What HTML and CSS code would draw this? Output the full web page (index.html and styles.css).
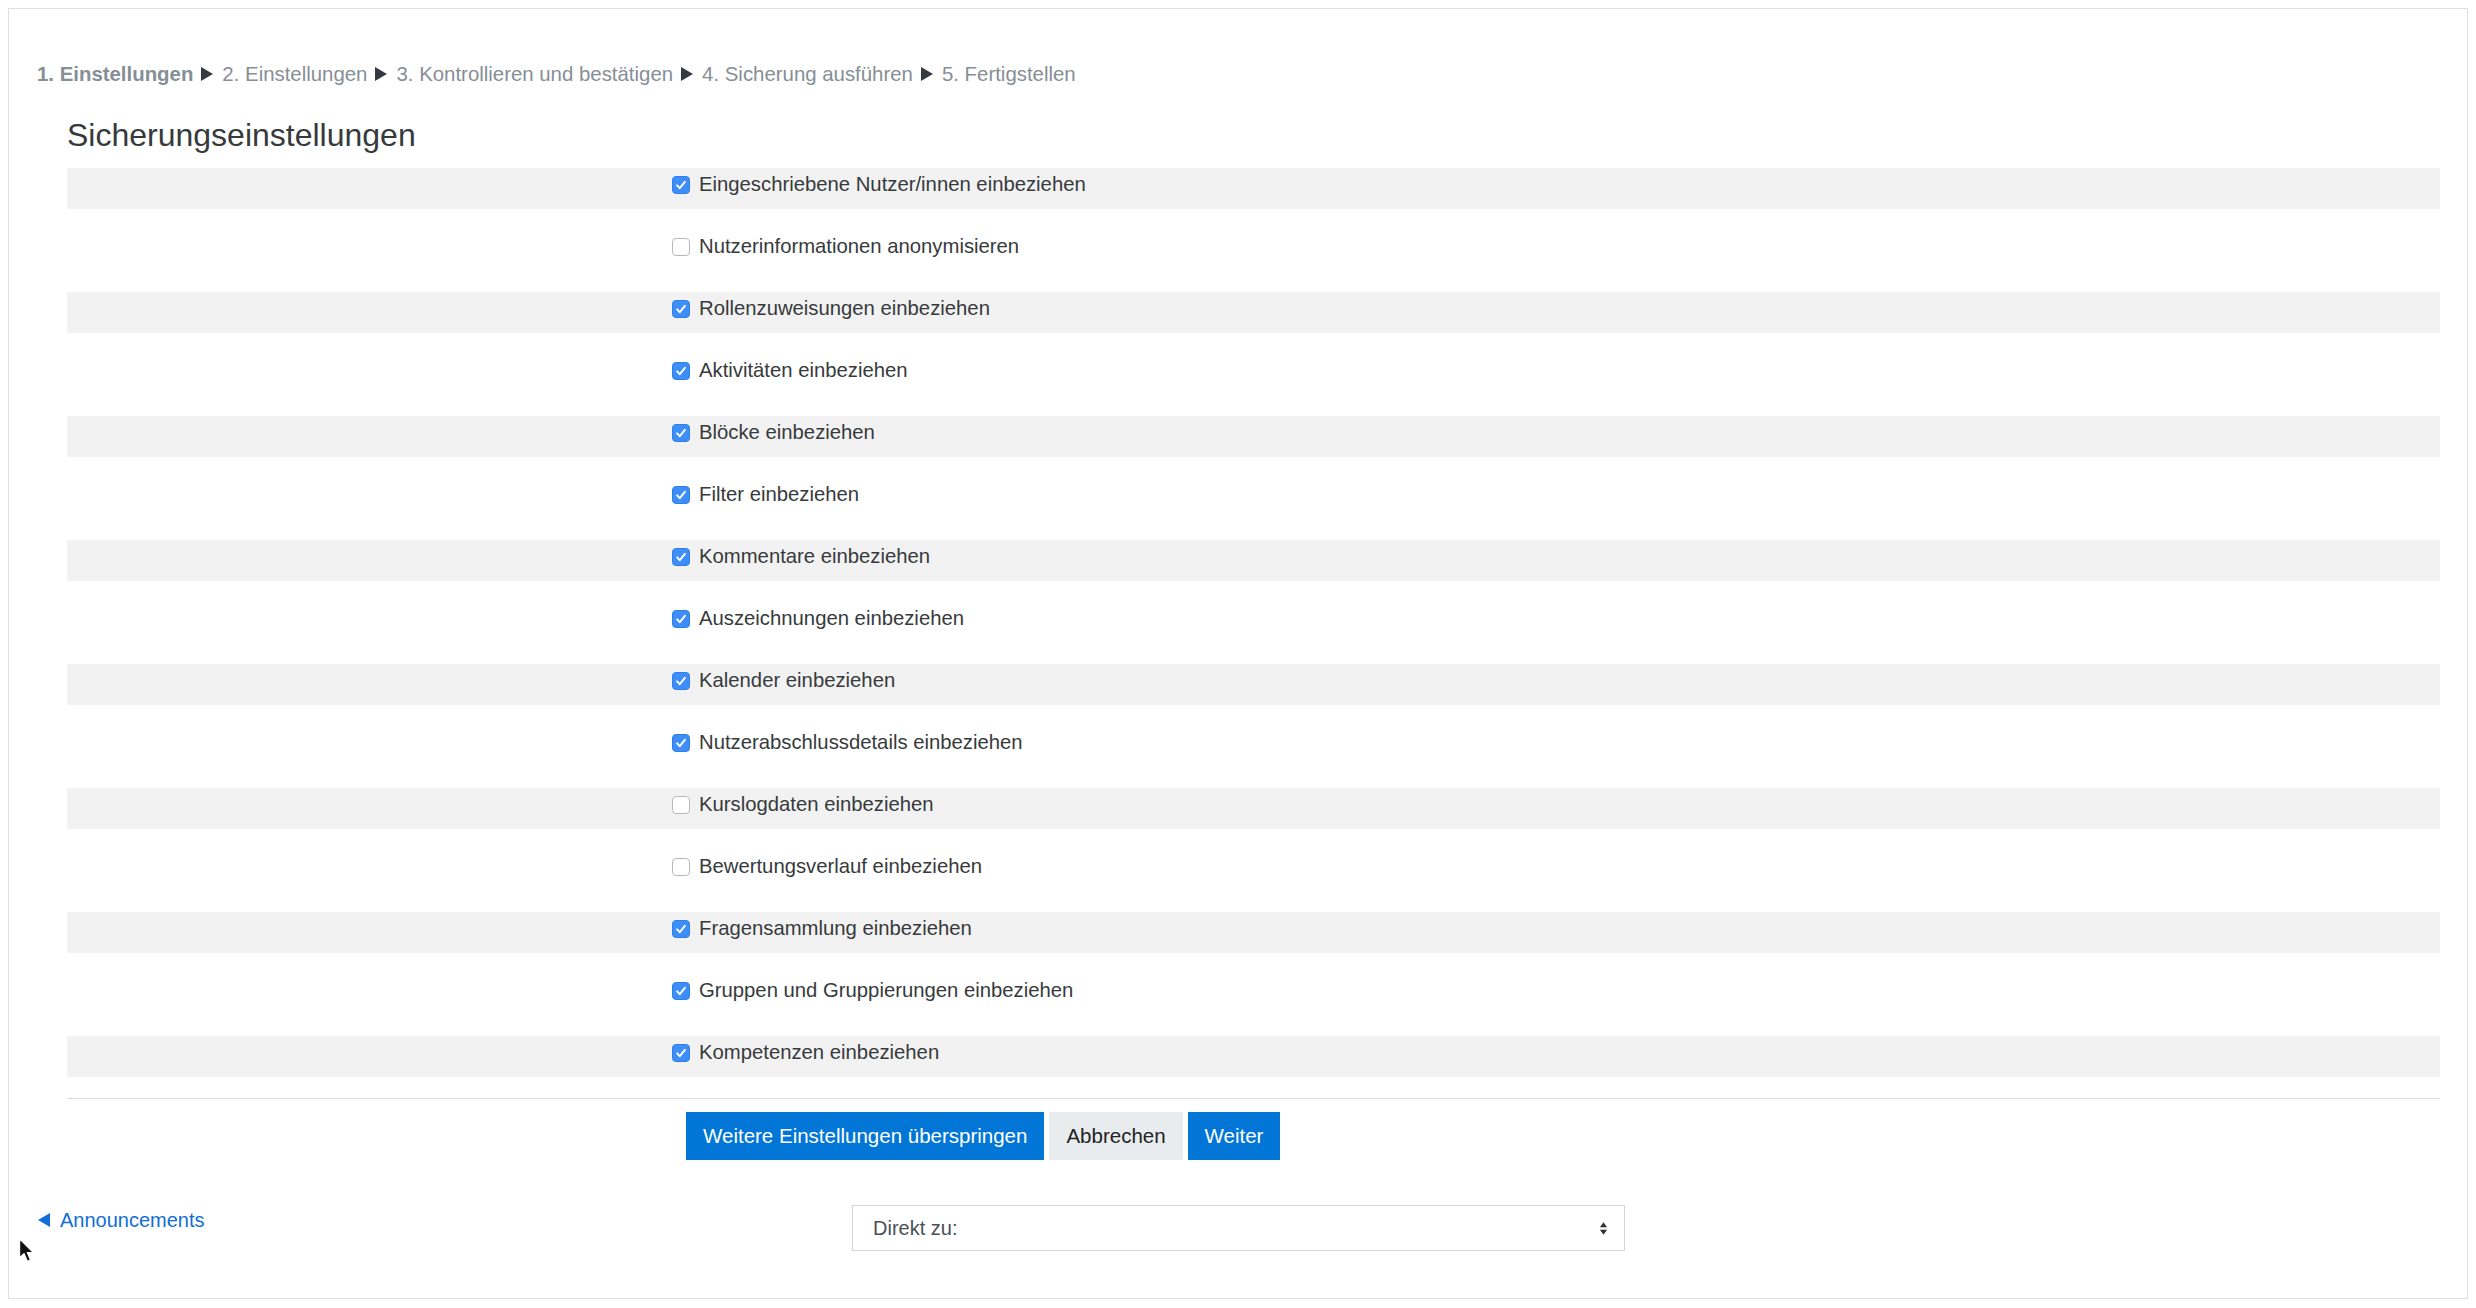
FILE: index.html
```html
<!DOCTYPE html>
<html lang="de">
<head>
<meta charset="utf-8">
<title>Sicherungseinstellungen</title>
<link rel="stylesheet" href="styles.css">
</head>
<body>
<div class="card">
  <div class="stages">
    <span class="stage current">1. Einstellungen</span>
    <svg class="sep" viewBox="0 0 12 14"><path d="M0 0 L12 7 L0 14 Z"/></svg>
    <span class="stage">2. Einstellungen</span>
    <svg class="sep" viewBox="0 0 12 14"><path d="M0 0 L12 7 L0 14 Z"/></svg>
    <span class="stage">3. Kontrollieren und bestätigen</span>
    <svg class="sep" viewBox="0 0 12 14"><path d="M0 0 L12 7 L0 14 Z"/></svg>
    <span class="stage">4. Sicherung ausführen</span>
    <svg class="sep" viewBox="0 0 12 14"><path d="M0 0 L12 7 L0 14 Z"/></svg>
    <span class="stage">5. Fertigstellen</span>
  </div>

  <form class="settings">
    <h2 class="legend">Sicherungseinstellungen</h2>
    <div class="rows">
      <div class="frow alt"><div class="lbl"></div><label class="opt"><span class="cb on"><svg viewBox="0 0 18 18"><path d="M4.6 9.4 L7.6 12.6 L13.4 5.4" /></svg></span><span>Eingeschriebene Nutzer/innen einbeziehen</span></label></div>
      <div class="frow"><div class="lbl"></div><label class="opt"><span class="cb"></span><span>Nutzerinformationen anonymisieren</span></label></div>
      <div class="frow alt"><div class="lbl"></div><label class="opt"><span class="cb on"><svg viewBox="0 0 18 18"><path d="M4.6 9.4 L7.6 12.6 L13.4 5.4" /></svg></span><span>Rollenzuweisungen einbeziehen</span></label></div>
      <div class="frow"><div class="lbl"></div><label class="opt"><span class="cb on"><svg viewBox="0 0 18 18"><path d="M4.6 9.4 L7.6 12.6 L13.4 5.4" /></svg></span><span>Aktivitäten einbeziehen</span></label></div>
      <div class="frow alt"><div class="lbl"></div><label class="opt"><span class="cb on"><svg viewBox="0 0 18 18"><path d="M4.6 9.4 L7.6 12.6 L13.4 5.4" /></svg></span><span>Blöcke einbeziehen</span></label></div>
      <div class="frow"><div class="lbl"></div><label class="opt"><span class="cb on"><svg viewBox="0 0 18 18"><path d="M4.6 9.4 L7.6 12.6 L13.4 5.4" /></svg></span><span>Filter einbeziehen</span></label></div>
      <div class="frow alt"><div class="lbl"></div><label class="opt"><span class="cb on"><svg viewBox="0 0 18 18"><path d="M4.6 9.4 L7.6 12.6 L13.4 5.4" /></svg></span><span>Kommentare einbeziehen</span></label></div>
      <div class="frow"><div class="lbl"></div><label class="opt"><span class="cb on"><svg viewBox="0 0 18 18"><path d="M4.6 9.4 L7.6 12.6 L13.4 5.4" /></svg></span><span>Auszeichnungen einbeziehen</span></label></div>
      <div class="frow alt"><div class="lbl"></div><label class="opt"><span class="cb on"><svg viewBox="0 0 18 18"><path d="M4.6 9.4 L7.6 12.6 L13.4 5.4" /></svg></span><span>Kalender einbeziehen</span></label></div>
      <div class="frow"><div class="lbl"></div><label class="opt"><span class="cb on"><svg viewBox="0 0 18 18"><path d="M4.6 9.4 L7.6 12.6 L13.4 5.4" /></svg></span><span>Nutzerabschlussdetails einbeziehen</span></label></div>
      <div class="frow alt"><div class="lbl"></div><label class="opt"><span class="cb"></span><span>Kurslogdaten einbeziehen</span></label></div>
      <div class="frow"><div class="lbl"></div><label class="opt"><span class="cb"></span><span>Bewertungsverlauf einbeziehen</span></label></div>
      <div class="frow alt"><div class="lbl"></div><label class="opt"><span class="cb on"><svg viewBox="0 0 18 18"><path d="M4.6 9.4 L7.6 12.6 L13.4 5.4" /></svg></span><span>Fragensammlung einbeziehen</span></label></div>
      <div class="frow"><div class="lbl"></div><label class="opt"><span class="cb on"><svg viewBox="0 0 18 18"><path d="M4.6 9.4 L7.6 12.6 L13.4 5.4" /></svg></span><span>Gruppen und Gruppierungen einbeziehen</span></label></div>
      <div class="frow alt"><div class="lbl"></div><label class="opt"><span class="cb on"><svg viewBox="0 0 18 18"><path d="M4.6 9.4 L7.6 12.6 L13.4 5.4" /></svg></span><span>Kompetenzen einbeziehen</span></label></div>
    </div>
    <div class="actions">
      <button type="button" class="btn primary">Weitere Einstellungen überspringen</button>
      <button type="button" class="btn secondary">Abbrechen</button>
      <button type="button" class="btn primary">Weiter</button>
    </div>
  </form>

  <div class="activity-nav">
    <div class="prev">
      <a href="#" class="prevlink"><svg class="tri" viewBox="0 0 12 14"><path d="M12 0 L0 7 L12 14 Z"/></svg>Announcements</a>
    </div>
    <div class="jump">
      <div class="select">
        <span>Direkt zu:</span>
        <svg class="arrows" viewBox="0 0 10 16"><path d="M5 1 L9 6.5 L1 6.5 Z M5 15 L9 9.5 L1 9.5 Z"/></svg>
      </div>
    </div>
    <div class="next"></div>
  </div>
</div>
<svg class="cursor" viewBox="0 0 18 27"><path d="M1.5 1.5 L1.5 21 L6 16.8 L9.3 24.5 L12.6 23.1 L9.4 15.6 L15.5 15.6 Z" fill="#111" stroke="#fff" stroke-width="1.4" stroke-linejoin="round"/></svg>
</body>
</html>
```

FILE: styles.css
```css
* { box-sizing: border-box; }

body {
  margin: 8px;
  font-family: "Liberation Sans", Arial, Helvetica, sans-serif;
  font-size: 20px;
  color: #373a3c;
  background: #fff;
}

.card {
  border: 1px solid #dedede;
  padding: 50px 27px 47px 28px;
}

.stages {
  line-height: 30px;
  height: 30px;
  color: #868e96;
  font-size: 20.4px;
  display: flex;
  align-items: center;
}

.stage.current { font-weight: bold; }

.sep {
  width: 12px;
  height: 14px;
  fill: #343a40;
  margin: 0 9px 0 8px;
  flex: none;
}

.settings {
  margin: 0;
  padding-left: 30px;
}

.legend {
  margin: 27px 0 14px 0;
  font-size: 32px;
  font-weight: normal;
  line-height: 38px;
  color: #373a3c;
}

.frow {
  display: grid;
  grid-template-columns: 605px 1fr;
  height: 41px;
  margin-bottom: 21px;
  padding-top: 1px;
}

.frow.alt { background: #f2f2f2; }

.opt {
  display: flex;
  align-items: flex-start;
  line-height: 30px;
  font-size: 20.3px;
}

.cb {
  width: 18px;
  height: 18px;
  margin-top: 7px;
  margin-right: 9px;
  border-radius: 4px;
  background: #fff;
  border: 1px solid #b9b9b9;
  flex: none;
  display: flex;
}

.cb.on {
  background: #3d8ef8;
  border-color: #2f7fe8;
}

.cb svg { width: 100%; height: 100%; }

.cb svg path {
  fill: none;
  stroke: #fff;
  stroke-width: 2.2;
  stroke-linecap: round;
  stroke-linejoin: round;
}

.actions {
  border-top: 1px solid #dcdce3;
  padding: 13px 0 0 619px;
  display: flex;
  gap: 5px;
}

.btn {
  height: 48px;
  padding: 0 17px;
  border: none;
  border-radius: 0;
  font-family: inherit;
  font-size: 20.5px;
  cursor: pointer;
}

.btn.primary {
  background: #0176d6;
  color: #fff;
}

.btn.secondary {
  background: #e9ecef;
  color: #222;
}

.activity-nav {
  display: grid;
  grid-template-columns: 1fr 1fr 1fr;
  margin-top: 45px;
}

.prev { line-height: 30px; }

.prevlink {
  color: #0f6fd6;
  text-decoration: none;
  display: inline-flex;
  align-items: center;
}

.tri {
  width: 12px;
  height: 14px;
  fill: #0f6fd6;
  margin-right: 10px;
  margin-left: 1px;
}

.jump { padding: 0 14px; }

.select {
  height: 46px;
  border: 1px solid #d3d3d8;
  display: flex;
  align-items: center;
  justify-content: space-between;
  padding: 0 16px 0 20px;
  color: #495057;
  background: #fff;
}

.arrows {
  width: 9px;
  height: 15px;
  fill: #333;
}

.cursor {
  position: absolute;
  left: 18px;
  top: 1237px;
  width: 18px;
  height: 27px;
}
```
